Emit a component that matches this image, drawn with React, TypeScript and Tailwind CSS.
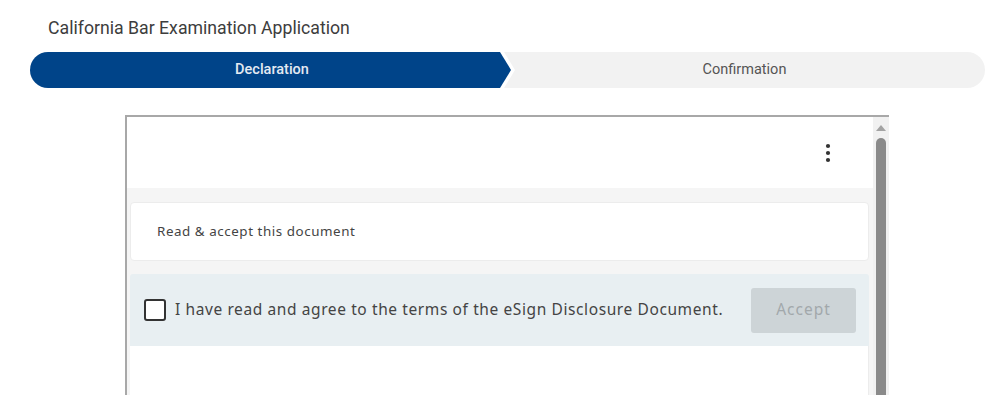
import React from "react";

export default function App() {
  return (
    <div className="w-[1002px] h-[395px] overflow-hidden bg-white relative" style={{ fontFamily: "Roboto, 'Liberation Sans', sans-serif" }}>
      <div className="pl-[48px] pt-[18px] h-[52px] text-[17.7px] leading-[21px] text-[#3d3d3d]">
        California Bar Examination Application
      </div>
      <div className="ml-[30px] mr-[17px] h-[36px] flex relative">
        <div className="relative w-[481px] h-full">
          <svg className="absolute inset-0" width="481" height="36" viewBox="0 0 481 36">
            <path d="M18 0 H470 L481 18 L470 36 H18 A18 18 0 0 1 18 0 Z" fill="#004489" />
          </svg>
          <div className="relative h-full flex items-center justify-center pl-[3px] text-[14.5px] font-medium text-[#e4eaf2]">Declaration</div>
        </div>
        <div className="relative flex-1 h-full -ml-[7px]">
          <div className="h-full bg-[#f2f2f2] rounded-r-[18px] flex items-center justify-center text-[14.5px] text-[#555555]" style={{ clipPath: "polygon(0 0, 100% 0, 100% 100%, 0 100%, 11px 50%)" }}>
            Confirmation
          </div>
        </div>
      </div>
      <div className="ml-[125px] mt-[27px] w-[764px] h-[300px] border-t-2 border-l-2 border-[#a8a8a8] flex">
        <div className="flex-1 flex flex-col" style={{ fontFamily: "'Noto Sans', 'Open Sans', sans-serif" }}>
          <div className="h-[71px] bg-white flex items-center justify-end pr-[42px]">
            <svg width="6" height="22" viewBox="0 0 6 22">
              <circle cx="3" cy="4" r="2.1" fill="#333" />
              <circle cx="3" cy="11" r="2.1" fill="#333" />
              <circle cx="3" cy="18" r="2.1" fill="#333" />
            </svg>
          </div>
          <div className="flex-1 bg-[#f5f5f5] pt-[14px] pl-[3px] pr-[4px] flex flex-col">
            <div className="h-[59px] bg-white border border-[#ececec] rounded-[4px] flex items-center pl-[26px] text-[13.4px] tracking-[0.55px] text-[#444]">
              Read &amp; accept this document
            </div>
            <div className="h-[13px]" />
            <div className="h-[72px] bg-[#e8eff2] rounded-t-[3px] flex items-center pl-[14px] pr-[13px]">
              <div className="w-[22px] h-[22px] border-2 border-[#333] rounded-[3px] bg-white shrink-0" />
              <div className="ml-[9px] flex-1 text-[15.5px] tracking-[0.6px] text-[#444] whitespace-nowrap">
                I have read and agree to the terms of the eSign Disclosure Document.
              </div>
              <div className="w-[105px] h-[45px] bg-[#cdd4d7] rounded-[3px] flex items-center justify-center text-[15.5px] tracking-[1px] text-[#a2a8ab]">
                Accept
              </div>
            </div>
            <div className="flex-1 bg-white border-r border-[#ececec]" />
          </div>
        </div>
        <div className="w-[16px] bg-[#f1f1f1] flex flex-col items-center">
          <svg className="mt-[8px]" width="10" height="6" viewBox="0 0 10 6">
            <path d="M5 0 L10 6 H0 Z" fill="#a3a3a3" />
          </svg>
          <div className="mt-[7px] w-[10px] flex-1 bg-[#8a8a8a] rounded-t-[5px]" />
        </div>
      </div>
    </div>
  );
}
